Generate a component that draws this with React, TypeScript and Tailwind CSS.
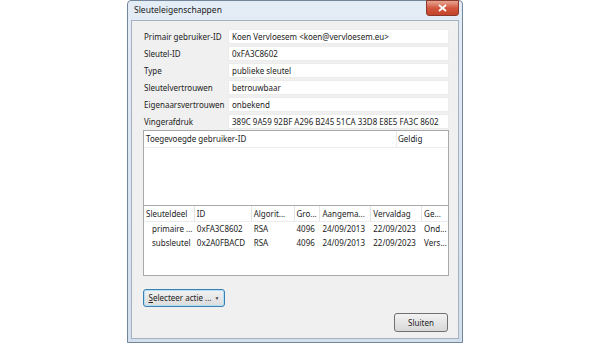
import React from "react";

const rows: [string, string][] = [
  ["Primair gebruiker-ID", "Koen Vervloesem <koen@vervloesem.eu>"],
  ["Sleutel-ID", "0xFA3C8602"],
  ["Type", "publieke sleutel"],
  ["Sleutelvertrouwen", "betrouwbaar"],
  ["Eigenaarsvertrouwen", "onbekend"],
  ["Vingerafdruk", "389C 9A59 92BF A296 B245 51CA 33D8 E8E5 FA3C 8602"],
];

const cols = [
  { label: "Sleuteldeel", w: 51 },
  { label: "ID", w: 57 },
  { label: "Algorit...", w: 43 },
  { label: "Gro...", w: 26 },
  { label: "Aangema...", w: 51 },
  { label: "Vervaldag", w: 51 },
  { label: "Ge...", w: 26 },
];

const data = [
  ["primaire ...", "0xFA3C8602", "RSA", "4096", "24/09/2013", "22/09/2023", "Ond..."],
  ["subsleutel", "0x2A0FBACD", "RSA", "4096", "24/09/2013", "22/09/2023", "Vers..."],
];

export default function App() {
  return (
    <div
      className="w-[608px] h-[347px] bg-white flex pl-[127px] text-[8px] text-[#222] leading-none"
      style={{ fontFamily: '"Noto Sans", "Open Sans", sans-serif' }}
    >
      <div className="w-[336px] h-[343px] flex flex-col border border-[#74869c] rounded-tl-[4px] rounded-tr-[4px] bg-gradient-to-b from-[#e4ecf6] to-[#d3dfec]">
        <div className="h-[19px] relative flex items-center pl-[6px] shrink-0">
          <span className="text-[#1a1a1a] text-[8.5px]">Sleuteleigenschappen</span>
          <div className="absolute right-[3px] top-[-1px] w-[33px] h-[16px] rounded-b-[3px] border border-[#8a3a2c] bg-gradient-to-b from-[#e6a593] via-[#d2573e] to-[#c4432a] flex items-center justify-center">
            <svg width="9" height="8" viewBox="0 0 9 8">
              <path d="M1 1 L8 7 M8 1 L1 7" stroke="white" strokeWidth="1.8" />
            </svg>
          </div>
        </div>
        <div className="flex-1 mx-[3px] mb-[3px] border border-[#a3b1c2] bg-[#f0f0f0] flex flex-col pt-[8px] pl-[11px] pr-[9px]">
          <div className="flex flex-col gap-[2px] pl-[1px]">
            {rows.map(([l, v]) => (
              <div key={l} className="flex items-center h-[15px]">
                <div className="w-[84px] shrink-0 whitespace-nowrap leading-[15px]">{l}</div>
                <div className="flex-1 h-[15px] bg-white border border-[#ececec] pl-[3px] whitespace-nowrap overflow-hidden leading-[13px]">
                  {v}
                </div>
              </div>
            ))}
          </div>
          <div className="mt-[1px] h-[146px] border border-[#a9a9a9] bg-white flex flex-col">
            <div className="h-[17px] flex items-center border-b border-[#ececec] shrink-0">
              <div className="w-[253px] pl-[2px] border-r border-[#ececec] h-full flex items-center">Toegevoegde gebruiker-ID</div>
              <div className="pl-[1px]">Geldig</div>
            </div>
            <div className="h-[57px]" />
            <div className="border-t border-[#a9a9a9]" />
            <div className="h-[16px] flex items-center border-b border-[#ececec] shrink-0">
              {cols.map((c, i) => (
                <div
                  key={c.label}
                  style={{ width: c.w }}
                  className={`h-full pl-[2px] whitespace-nowrap overflow-hidden leading-[15px] ${i < cols.length - 1 ? "border-r border-[#e4e4e4]" : ""}`}
                >
                  {c.label}
                </div>
              ))}
            </div>
            <div className="flex flex-col">
              {data.map((r) => (
                <div key={r[0]} className="h-[14px] flex items-center">
                  {r.map((cell, i) => (
                    <div
                      key={i}
                      style={{ width: cols[i].w }}
                      className={`whitespace-nowrap overflow-hidden leading-[14px] ${i === 0 ? "pl-[8px]" : "pl-[2px]"}`}
                    >
                      {cell}
                    </div>
                  ))}
                </div>
              ))}
            </div>
          </div>
          <div className="mt-[13px] flex">
            <div className="w-[82px] h-[18px] rounded-[3px] border border-[#3c7fb1] shadow-[0_0_0_1px_#aee0f7_inset] bg-gradient-to-b from-[#f2f2f2] to-[#dcdcdc] flex items-center justify-center gap-[3px]">
              <span>
                <span className="underline">S</span>electeer actie ...
              </span>
              <span className="text-[5px] text-[#444]">▼</span>
            </div>
          </div>
          <div className="mt-[6px] flex justify-end pr-[1px]">
            <div className="w-[54px] h-[19px] rounded-[3px] border border-[#707070] bg-gradient-to-b from-[#f2f2f2] to-[#d8d8d8] flex items-center justify-center">
              Sluiten
            </div>
          </div>
        </div>
      </div>
    </div>
  );
}
